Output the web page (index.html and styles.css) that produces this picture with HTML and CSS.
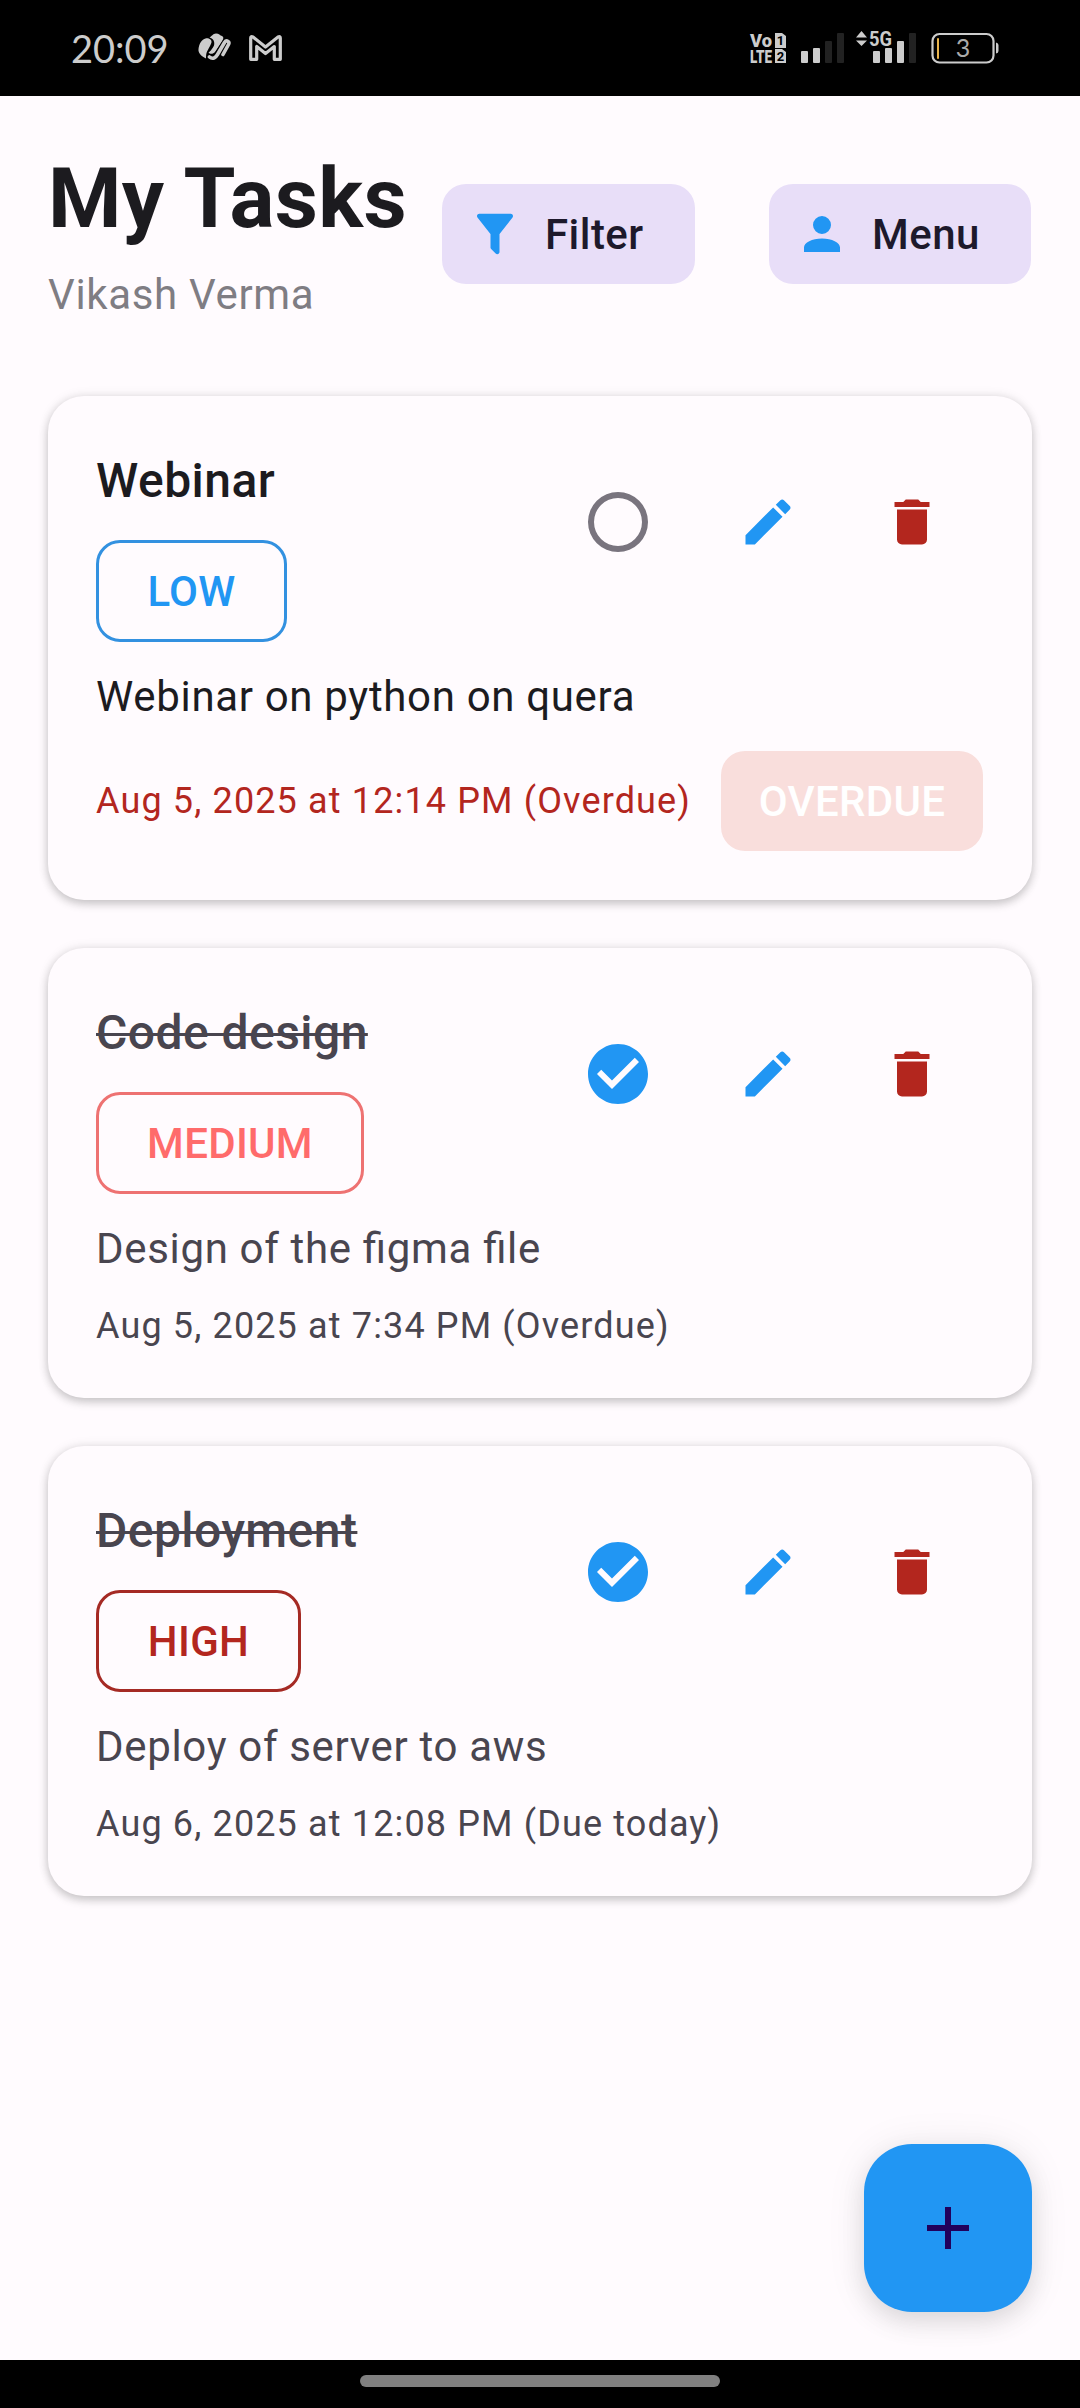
FILE: index.html
```html
<!DOCTYPE html>
<html lang="en">
<head>
<meta charset="utf-8">
<title>My Tasks</title>
<link rel="stylesheet" href="styles.css">
</head>
<body>
<svg class="defs" width="0" height="0" aria-hidden="true">
  <symbol id="filter" viewBox="0 0 24 24"><path d="M14,12V19.88C14.04,20.18 13.94,20.5 13.71,20.71C13.32,21.1 12.69,21.1 12.3,20.71L10.29,18.7C10.06,18.47 9.96,18.16 10,17.87V12H9.97L4.21,4.62C3.87,4.19 3.95,3.56 4.38,3.22C4.57,3.08 4.78,3 5,3H19C19.22,3 19.43,3.08 19.62,3.22C20.05,3.56 20.13,4.19 19.79,4.62L14.03,12H14Z"/></symbol>
  <symbol id="account" viewBox="0 0 24 24"><path d="M12,4A4,4 0 0,1 16,8A4,4 0 0,1 12,12A4,4 0 0,1 8,8A4,4 0 0,1 12,4M12,14C16.42,14 20,15.79 20,18V20H4V18C4,15.79 7.58,14 12,14Z"/></symbol>
  <symbol id="circle" viewBox="0 0 24 24"><path d="M12,20A8,8 0 0,1 4,12A8,8 0 0,1 12,4A8,8 0 0,1 20,12A8,8 0 0,1 12,20M12,2A10,10 0 0,0 2,12A10,10 0 0,0 12,22A10,10 0 0,0 22,12A10,10 0 0,0 12,2Z"/></symbol>
  <symbol id="check" viewBox="0 0 24 24"><path d="M12 2C6.5 2 2 6.5 2 12S6.5 22 12 22 22 17.5 22 12 17.5 2 12 2M10 17L5 12L6.41 10.59L10 14.17L17.59 6.58L19 8L10 17Z"/></symbol>
  <symbol id="pencil" viewBox="0 0 24 24"><path d="M20.71,7.04C21.1,6.65 21.1,6 20.71,5.63L18.37,3.29C18,2.9 17.35,2.9 16.96,3.29L15.12,5.12L18.87,8.87M3,17.25V21H6.75L17.81,9.93L14.06,6.18L3,17.25Z"/></symbol>
  <symbol id="delete" viewBox="0 0 24 24"><path d="M19,4H15.5L14.5,3H9.5L8.5,4H5V6H19M6,19A2,2 0 0,0 8,21H16A2,2 0 0,0 18,19V7H6V19Z"/></symbol>
  <symbol id="plus" viewBox="0 0 24 24"><path d="M19,13H13V19H11V13H5V11H11V5H13V11H19V13Z"/></symbol>
</svg>
<div class="screen">
  <div class="status">
    <span class="clock">20:09</span>
    <svg class="brand" width="34" height="28" viewBox="0 0 34 28">
      <path fill="#ccc" d="M8 25.500C3 23 0 20 .5 16C1 11 4 6 7.500 5.500C9.500 5 11.500 5.500 13 7C14 9 13.500 10 12 13C10.500 16 9 18 8.500 20C8 22 8 24 8 25.500Z"/>
      <path fill="#ccc" d="M11.500 4.500C13.500 3.500 15 .5 18 .5C21 .5 22 2.500 24 3C26 4 25.500 6 24 8.500L17 19C15 21.500 11.500 21 10.500 19.500C11.500 19 14.500 16 16 12.500C17 9 15.500 5.500 11.500 4.500Z"/>
      <path fill="none" stroke="#000" stroke-width="5.400" stroke-linecap="round" d="M12 24C15 26 18 23.500 19.500 21L26.500 9.500C28.500 6.500 32 8.500 30.500 11.500L25 21.500"/>
      <path fill="none" stroke="#ccc" stroke-width="3.600" stroke-linecap="round" d="M11.500 24C15 27 18 24 19.500 21.500L26.500 9.500C28.500 6.500 32 8.500 30.500 11.500L25 21.500"/>
    </svg>
    <svg class="mail" width="33" height="26" viewBox="0 0 33 26"><path fill="none" stroke="#ccc" stroke-width="3.2" stroke-linejoin="round" d="M1.7 3Q1.7 1 4 2L16.5 12L29 2Q31.3 1 31.3 3V24.3H25.3V11.5L16.5 18.5L7.7 11.5V24.3H1.7Z"/></svg>
    <svg class="radio" width="250" height="34" viewBox="0 0 250 34">
      <g fill="#ccc">
        <text class="tiny" x="0" y="17" textLength="22" lengthAdjust="spacingAndGlyphs">Vo</text>
        <text class="tiny" x="0" y="33" textLength="22" lengthAdjust="spacingAndGlyphs">LTE</text>
        <path d="M25 3H32L36 6V18H25ZM25 19H32L36 22V33H25Z"/>
        <rect x="51" y="21" width="7" height="12" rx="1"/><rect x="63" y="18" width="7" height="15" rx="1"/>
        <path d="M106 7.500L111.500 1L117 7.500ZM106 10.500L111.500 16L117 10.500Z"/>
        <rect x="123" y="21" width="7" height="12" rx="1"/><rect x="135" y="18" width="7" height="15" rx="1"/><rect x="147" y="11" width="7" height="22" rx="1"/>
        <text class="five" x="119" y="16" textLength="23" lengthAdjust="spacingAndGlyphs">5G</text>
      </g>
      <g fill="#222"><rect x="75" y="11" width="7" height="22" rx="1"/><rect x="87" y="3" width="7" height="30" rx="1"/><rect x="159" y="3" width="7" height="30" rx="1"/></g>
      <text class="sim" x="30.500" y="15" text-anchor="middle">1</text>
      <text class="sim" x="30.500" y="31" text-anchor="middle">2</text>
      <rect x="182.500" y="4" width="61" height="28.500" rx="7" fill="none" stroke="#ccc" stroke-width="2.200"/>
      <path d="M246 12.500Q248.500 13 248.500 15V21Q248.500 23 246 23.500Z" fill="#ccc"/>
      <rect x="187" y="8" width="2" height="21" rx="1" fill="#eab54d"/>
      <text class="level" x="213" y="27" text-anchor="middle">3</text>
    </svg>
  </div>

  <header class="header">
    <div class="heading">
      <h1>My Tasks</h1>
      <p class="user">Vikash Verma</p>
    </div>
    <div class="chip filter-chip"><svg><use href="#filter"/></svg><span>Filter</span></div>
    <div class="chip menu-chip"><svg><use href="#account"/></svg><span>Menu</span></div>
  </header>

  <main class="list">
    <article class="card">
      <div class="top">
        <div class="info"><h2>Webinar</h2><span class="priority low">LOW</span></div>
        <div class="actions"><svg class="toggle open"><use href="#circle"/></svg><svg class="edit"><use href="#pencil"/></svg><svg class="trash"><use href="#delete"/></svg></div>
      </div>
      <p class="desc">Webinar on python on quera</p>
      <div class="due"><span class="date late">Aug 5, 2025 at 12:14 PM (Overdue)</span><span class="overdue">OVERDUE</span></div>
    </article>
    <article class="card done">
      <div class="top">
        <div class="info"><h2>Code design</h2><span class="priority medium">MEDIUM</span></div>
        <div class="actions"><svg class="toggle"><use href="#check"/></svg><svg class="edit"><use href="#pencil"/></svg><svg class="trash"><use href="#delete"/></svg></div>
      </div>
      <p class="desc">Design of the figma file</p>
      <div class="due"><span class="date">Aug 5, 2025 at 7:34 PM (Overdue)</span></div>
    </article>
    <article class="card done">
      <div class="top">
        <div class="info"><h2>Deployment</h2><span class="priority high">HIGH</span></div>
        <div class="actions"><svg class="toggle"><use href="#check"/></svg><svg class="edit"><use href="#pencil"/></svg><svg class="trash"><use href="#delete"/></svg></div>
      </div>
      <p class="desc">Deploy of server to aws</p>
      <div class="due"><span class="date">Aug 6, 2025 at 12:08 PM (Due today)</span></div>
    </article>
  </main>

  <button class="fab" aria-label="Add task"><svg><use href="#plus"/></svg></button>
  <div class="navbar"><span class="pill"></span></div>
</div>
</body>
</html>
```
FILE: styles.css
```css
* { box-sizing: border-box; }
body {
  margin: 0;
  background: #fffbfe;
  font-family: Roboto, sans-serif;
  color: #1c1b1f;
}
h1, h2, p { margin: 0; }
svg { display: block; flex: none; fill: currentColor; }
.defs { position: absolute; }
.screen {
  position: relative;
  display: flex;
  flex-direction: column;
  width: 1080px;
  height: 2408px;
  overflow: hidden;
}

/* status bar */
.status {
  display: flex;
  flex: none;
  height: 96px;
  padding: 0 80px 0 71px;
  background: #000;
  color: #ccc;
}
.clock {
  width: 127px;
  padding-top: 26px;
  font: 38px/44px Lato, sans-serif;
}
.brand { margin-top: 33px; }
.mail { margin: 35px 0 0 17px; }
.radio { margin: 30px 0 0 auto; overflow: visible; }
.tiny { font: 900 19px Roboto, sans-serif; }
.five { font: 700 20px Roboto, sans-serif; }
.sim { font: 700 13px Roboto, sans-serif; fill: #000; }
.level { font: 25px Lato, sans-serif; fill: #aaa; }

/* header */
.header {
  display: flex;
  flex: none;
  align-items: flex-start;
  height: 252px;
  padding-left: 48px;
}
.heading { width: 394px; padding-top: 49px; }
h1 { font-size: 84px; line-height: 108px; font-weight: 700; letter-spacing: .3px; white-space: nowrap; }
.user {
  margin-top: 12px;
  font-size: 42px;
  line-height: 60px;
  letter-spacing: .67px;
  color: #7f7d83;
}
.chip {
  display: flex;
  align-items: center;
  height: 100px;
  margin-top: 88px;
  padding-left: 26px;
  border-radius: 24px;
  background: #e8def8;
  color: #1d192b;
  font-size: 42px;
  font-weight: 500;
  letter-spacing: .45px;
}
.chip svg { width: 54px; height: 54px; margin-right: 23px; color: #2196f3; }
.filter-chip { width: 253px; margin-right: 74px; }
.menu-chip { width: 262px; }

/* task cards */
.list { display: flex; flex-direction: column; gap: 48px; padding: 48px 48px 0; }
.card {
  padding: 48px;
  border-radius: 36px;
  background: #fffbfe;
  box-shadow: 0 4px 10px rgba(0, 0, 0, .19), 0 0 12px rgba(0, 0, 0, .09);
}
.top { display: flex; justify-content: space-between; height: 198px; }
.info { display: flex; flex-direction: column; align-items: flex-start; gap: 24px; }
h2 {
  height: 72px;
  font-size: 48px;
  line-height: 74px;
  font-weight: 500;
  letter-spacing: .45px;
  white-space: nowrap;
}
.priority {
  height: 102px;
  border: 3px solid currentColor;
  border-radius: 24px;
  font-size: 42px;
  line-height: 98px;
  font-weight: 500;
  letter-spacing: .3px;
  text-align: center;
}
.low { width: 191px; color: #2196f3; border-color: #3391e0; }
.medium { width: 268px; color: #ff6b6b; border-color: #ee7272; }
.high { width: 205px; color: #b3261e; border-color: #a52a24; }
.actions { display: flex; align-items: center; height: 156px; }
.toggle { width: 72px; height: 72px; margin-right: 84px; color: #2196f3; }
.toggle.open { color: #79747e; }
.edit { width: 60px; height: 60px; margin-right: 84px; color: #2196f3; }
.trash { width: 60px; height: 60px; margin-right: 42px; color: #b3261e; }
.desc {
  height: 60px;
  margin-top: 24px;
  font-size: 42px;
  line-height: 62px;
  letter-spacing: .67px;
  font-feature-settings: "liga" 1;
}
.due { display: flex; align-items: center; justify-content: space-between; margin-top: 24px; }
.date {
  font-size: 36px;
  line-height: 48px;
  letter-spacing: 1.14px;
  white-space: nowrap;
}
.late { color: #b3261e; }
.overdue {
  width: 262px;
  height: 100px;
  margin: 1px 1px 1px 0;
  border-radius: 24px;
  background: #f9dedc;
  color: #fff;
  font-size: 42px;
  line-height: 102px;
  font-weight: 500;
  letter-spacing: .3px;
  text-align: center;
}
.done { color: #49454f; }
.done h2 { text-decoration: line-through; text-decoration-thickness: 3px; }

/* floating action button */
.fab {
  position: absolute;
  right: 48px;
  bottom: 96px;
  display: flex;
  align-items: center;
  justify-content: center;
  width: 168px;
  height: 168px;
  padding: 0;
  border: 0;
  border-radius: 48px;
  background: #2196f3;
  color: #21005d;
  box-shadow: 0 10px 24px rgba(0, 0, 0, .1), 0 2px 40px rgba(0, 0, 0, .08);
}
.fab svg { width: 72px; height: 72px; }

/* gesture bar */
.navbar {
  position: relative;
  display: flex;
  justify-content: center;
  height: 48px;
  margin-top: auto;
  padding-top: 15px;
  background: #000;
}
.pill { width: 360px; height: 12px; border-radius: 6px; background: #808080; }
```
